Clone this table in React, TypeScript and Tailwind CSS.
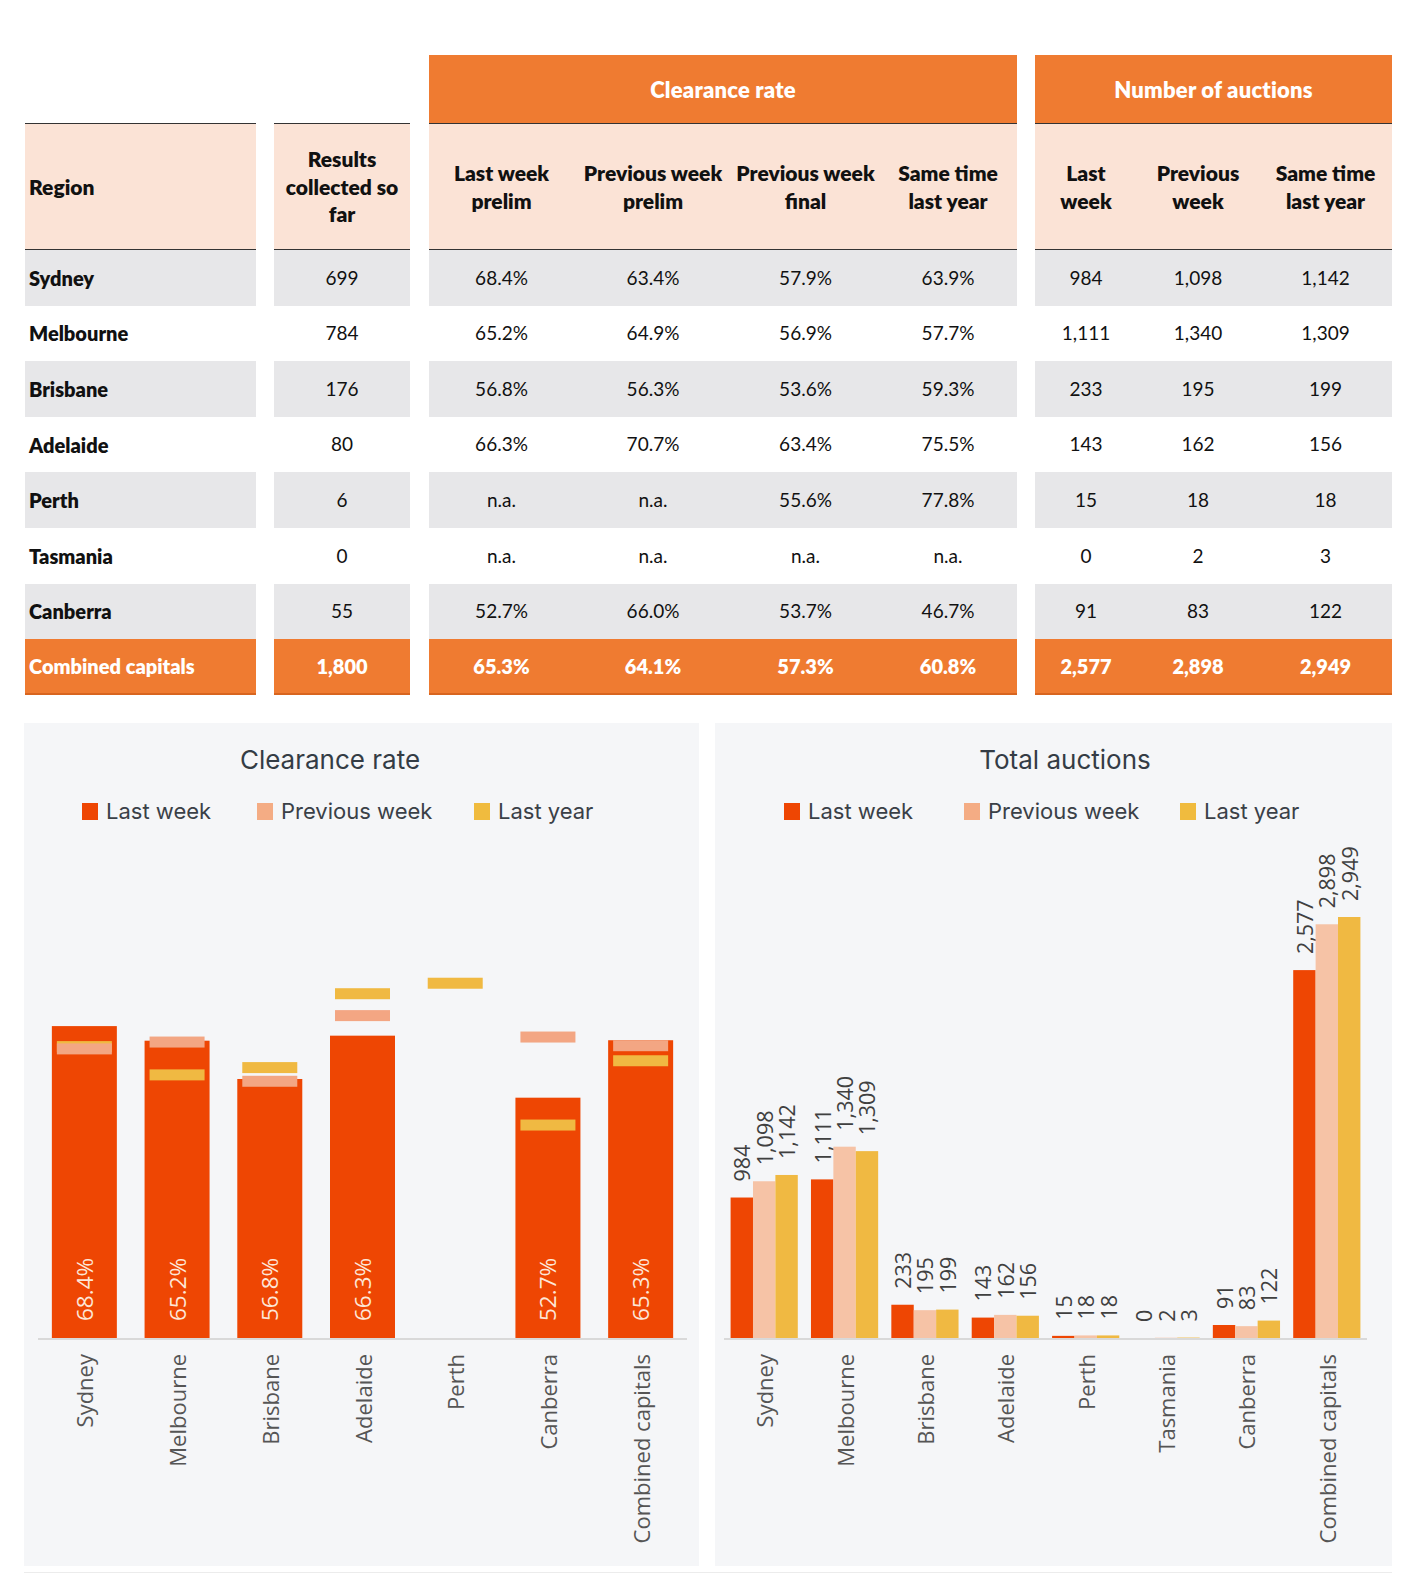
import React from 'react';

type Row = { name: string; res: string; c: string[]; a: string[] };

const rows: Row[] = [
  { name: 'Sydney', res: '699', c: ['68.4%', '63.4%', '57.9%', '63.9%'], a: ['984', '1,098', '1,142'] },
  { name: 'Melbourne', res: '784', c: ['65.2%', '64.9%', '56.9%', '57.7%'], a: ['1,111', '1,340', '1,309'] },
  { name: 'Brisbane', res: '176', c: ['56.8%', '56.3%', '53.6%', '59.3%'], a: ['233', '195', '199'] },
  { name: 'Adelaide', res: '80', c: ['66.3%', '70.7%', '63.4%', '75.5%'], a: ['143', '162', '156'] },
  { name: 'Perth', res: '6', c: ['n.a.', 'n.a.', '55.6%', '77.8%'], a: ['15', '18', '18'] },
  { name: 'Tasmania', res: '0', c: ['n.a.', 'n.a.', 'n.a.', 'n.a.'], a: ['0', '2', '3'] },
  { name: 'Canberra', res: '55', c: ['52.7%', '66.0%', '53.7%', '46.7%'], a: ['91', '83', '122'] },
];
const combined: Row = { name: 'Combined capitals', res: '1,800', c: ['65.3%', '64.1%', '57.3%', '60.8%'], a: ['2,577', '2,898', '2,949'] };

const cw = ['w-[145px]', 'w-[158px]', 'w-[147px]', 'w-[138px]'];
const aw = ['w-[102px]', 'w-[122px]', 'w-[133px]'];

function rowBg(i: number) {
  return i % 2 === 0 ? 'bg-[#e7e7e9]' : 'bg-white';
}

function HeaderTop({ title }: { title?: string }) {
  if (!title) return <div className="h-[68px]" />;
  return (
    <div className="h-[68px] bg-[#ef7b31] flex items-center justify-center text-white font-extrabold text-[22px] tracking-[0.2px]">
      {title}
    </div>
  );
}

function SubHeader({ children }: { children: React.ReactNode }) {
  return (
    <div className="h-[127px] bg-[#fbe3d6] border-t border-b border-[#333333] flex items-center font-extrabold text-[21px] leading-[27.7px] text-[#111111]">
      {children}
    </div>
  );
}

function DataRow({ i, combinedRow, children }: { i: number; combinedRow?: boolean; children: React.ReactNode }) {
  if (combinedRow) {
    return (
      <div className="h-[56px] bg-[#ef7b31] border-b-2 border-[#d8651f] flex items-center font-extrabold text-[20px] text-white">
        {children}
      </div>
    );
  }
  return <div className={`h-[55.6px] flex items-center text-[19px] text-[#111111] ${rowBg(i)}`}>{children}</div>;
}

function Table() {
  return (
    <div className="flex ml-[1px] font-['Lato',sans-serif]">
      {/* Region */}
      <div className="w-[231px] flex flex-col">
        <HeaderTop />
        <SubHeader>
          <span className="pl-[4px]">Region</span>
        </SubHeader>
        {rows.map((r, i) => (
          <DataRow key={r.name} i={i}>
            <span className="pl-[4px] font-extrabold text-[20px]">{r.name}</span>
          </DataRow>
        ))}
        <DataRow i={7} combinedRow>
          <span className="pl-[4px]">{combined.name}</span>
        </DataRow>
      </div>
      {/* Results */}
      <div className="w-[136px] ml-[18px] flex flex-col">
        <HeaderTop />
        <SubHeader>
          <span className="w-full text-center">
            Results
            <br />
            collected so
            <br />
            far
          </span>
        </SubHeader>
        {rows.map((r, i) => (
          <DataRow key={r.name} i={i}>
            <span className="w-full text-center">{r.res}</span>
          </DataRow>
        ))}
        <DataRow i={7} combinedRow>
          <span className="w-full text-center">{combined.res}</span>
        </DataRow>
      </div>
      {/* Clearance */}
      <div className="w-[588px] ml-[19px] flex flex-col">
        <HeaderTop title="Clearance rate" />
        <SubHeader>
          <span className={`${cw[0]} text-center`}>
            Last week
            <br />
            prelim
          </span>
          <span className={`${cw[1]} text-center`}>
            Previous week
            <br />
            prelim
          </span>
          <span className={`${cw[2]} text-center`}>
            Previous week
            <br />
            final
          </span>
          <span className={`${cw[3]} text-center`}>
            Same time
            <br />
            last year
          </span>
        </SubHeader>
        {rows.map((r, i) => (
          <DataRow key={r.name} i={i}>
            {r.c.map((v, j) => (
              <span key={j} className={`${cw[j]} text-center`}>
                {v}
              </span>
            ))}
          </DataRow>
        ))}
        <DataRow i={7} combinedRow>
          {combined.c.map((v, j) => (
            <span key={j} className={`${cw[j]} text-center`}>
              {v}
            </span>
          ))}
        </DataRow>
      </div>
      {/* Auctions */}
      <div className="w-[357px] ml-[18px] flex flex-col">
        <HeaderTop title="Number of auctions" />
        <SubHeader>
          <span className={`${aw[0]} text-center`}>
            Last
            <br />
            week
          </span>
          <span className={`${aw[1]} text-center`}>
            Previous
            <br />
            week
          </span>
          <span className={`${aw[2]} text-center`}>
            Same time
            <br />
            last year
          </span>
        </SubHeader>
        {rows.map((r, i) => (
          <DataRow key={r.name} i={i}>
            {r.a.map((v, j) => (
              <span key={j} className={`${aw[j]} text-center`}>
                {v}
              </span>
            ))}
          </DataRow>
        ))}
        <DataRow i={7} combinedRow>
          {combined.a.map((v, j) => (
            <span key={j} className={`${aw[j]} text-center`}>
              {v}
            </span>
          ))}
        </DataRow>
      </div>
    </div>
  );
}

const RED = '#ee4603';
const SALMON = '#f3a683';
const PEACH = '#f6c3a6';
const YELLOW = '#f0b942';

function Legend({ left }: { left: 'l' | 'r' }) {
  return (
    <div
      className={`mt-[16px] h-[36px] flex items-center text-[22px] text-[#3a4047] font-['Inter',sans-serif] ${
        left === 'l' ? 'pl-[58px]' : 'pl-[69px]'
      }`}
    >
      <div className={`flex items-center gap-[8px] ${left === 'l' ? 'w-[175px]' : 'w-[180px]'}`}>
        <span className="w-[16px] h-[17px] bg-[#ee4603] inline-block" />
        <span>Last week</span>
      </div>
      <div className={`flex items-center gap-[8px] ${left === 'l' ? 'w-[217px]' : 'w-[216px]'}`}>
        <span className="w-[16px] h-[17px] bg-[#f4ac84] inline-block" />
        <span>Previous week</span>
      </div>
      <div className="flex items-center gap-[8px]">
        <span className="w-[16px] h-[17px] bg-[#f0bb3e] inline-block" />
        <span>Last year</span>
      </div>
    </div>
  );
}

const crLabels = ['Sydney', 'Melbourne', 'Brisbane', 'Adelaide', 'Perth', 'Canberra', 'Combined capitals'];
const crLast: (number | null)[] = [68.4, 65.2, 56.8, 66.3, null, 52.7, 65.3];
const crPrev: (number | null)[] = [63.4, 64.9, 56.3, 70.7, null, 66.0, 64.1];
const crLy: (number | null)[] = [63.9, 57.7, 59.3, 75.5, 77.8, 46.7, 60.8];

function ClearanceChart() {
  const base = 509;
  const x0 = 14;
  const slot = 649 / 7;
  const k = 4.56;
  return (
    <svg width={675} height={737} className="block">
      {crLabels.map((lab, i) => {
        const cx = x0 + slot * (i + 0.5);
        const v = crLast[i];
        const p = crPrev[i];
        const y = crLy[i];
        return (
          <g key={lab}>
            {v !== null && <rect x={cx - 32.5} y={base - v * k} width={65} height={v * k} fill={RED} />}
            {y !== null && <rect x={cx - 27.5} y={base - y * k - 5.5} width={55} height={11} fill={YELLOW} />}
            {p !== null && <rect x={cx - 27.5} y={base - p * k - 5.5} width={55} height={11} fill={SALMON} />}
            {v !== null && (
              <text
                transform={`translate(${cx},${base - 17}) rotate(-90)`}
                textAnchor="start"
                dominantBaseline="central"
                fontFamily="'Open Sans', sans-serif"
                fontSize={22.5}
                fill="#fde6d8"
              >
                {v.toFixed(1)}%
              </text>
            )}
            <text
              transform={`translate(${cx},${base + 16}) rotate(-90)`}
              textAnchor="end"
              dominantBaseline="central"
              fontFamily="'Open Sans', sans-serif"
              fontSize={22}
              fill="#555555"
            >
              {lab}
            </text>
          </g>
        );
      })}
      <line x1={14} x2={663} y1={base + 1} y2={base + 1} stroke="#d9d9d9" strokeWidth={2} />
    </svg>
  );
}

const taLabels = ['Sydney', 'Melbourne', 'Brisbane', 'Adelaide', 'Perth', 'Tasmania', 'Canberra', 'Combined capitals'];
const taLast = [984, 1111, 233, 143, 15, 0, 91, 2577];
const taPrev = [1098, 1340, 195, 162, 18, 2, 83, 2898];
const taLy = [1142, 1309, 199, 156, 18, 3, 122, 2949];

function fmt(n: number) {
  return n.toLocaleString('en-US');
}

function AuctionsChart() {
  const base = 509;
  const x0 = 9;
  const slot = 643 / 8;
  const k = 421 / 2949;
  const bw = 22.4;
  const series = [
    { data: taLast, color: RED, off: -bw * 1.5 },
    { data: taPrev, color: PEACH, off: -bw * 0.5 },
    { data: taLy, color: YELLOW, off: bw * 0.5 },
  ];
  return (
    <svg width={677} height={737} className="block">
      {taLabels.map((lab, i) => {
        const cx = x0 + slot * (i + 0.5);
        return (
          <g key={lab}>
            {series.map((s, j) => {
              const h = s.data[i] * k;
              const bx = cx + s.off;
              return (
                <g key={j}>
                  <rect x={bx} y={base - h} width={bw} height={h} fill={s.color} />
                  <text
                    transform={`translate(${bx + bw / 2},${base - h - 16}) rotate(-90)`}
                    textAnchor="start"
                    dominantBaseline="central"
                    fontFamily="'Open Sans', sans-serif"
                    fontSize={21.5}
                    fill="#404040"
                  >
                    {fmt(s.data[i])}
                  </text>
                </g>
              );
            })}
            <text
              transform={`translate(${cx},${base + 16}) rotate(-90)`}
              textAnchor="end"
              dominantBaseline="central"
              fontFamily="'Open Sans', sans-serif"
              fontSize={22}
              fill="#555555"
            >
              {lab}
            </text>
          </g>
        );
      })}
      <line x1={9} x2={652} y1={base + 1} y2={base + 1} stroke="#d9d9d9" strokeWidth={2} />
    </svg>
  );
}

export default function App() {
  return (
    <div className="w-[1416px] min-h-[1594px] bg-white pt-[55px] pl-[24px]">
      <Table />
      <div className="flex gap-[16px] mt-[28px]">
        <div className="w-[675px] h-[843px] bg-[#f5f6f8] flex flex-col">
          <div className="mt-[18px] h-[36px] ml-[106px] w-[400px] flex items-center justify-center text-[26px] text-[#343c45] font-['Inter',sans-serif]">
            Clearance rate
          </div>
          <Legend left="l" />
          <ClearanceChart />
        </div>
        <div className="w-[677px] h-[843px] bg-[#f5f6f8] flex flex-col">
          <div className="mt-[18px] h-[36px] ml-[150px] w-[400px] flex items-center justify-center text-[26px] text-[#343c45] font-['Inter',sans-serif]">
            Total auctions
          </div>
          <Legend left="r" />
          <AuctionsChart />
        </div>
      </div>
      <div className="mt-[6px] h-[1px] w-[1368px] bg-[#ececec]" />
    </div>
  );
}
